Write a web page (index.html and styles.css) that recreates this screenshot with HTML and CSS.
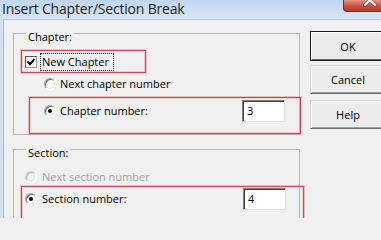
FILE: index.html
```html
<!DOCTYPE html>
<html>
<head>
<meta charset="utf-8">
<title>Insert Chapter/Section Break</title>
<link rel="stylesheet" href="styles.css">
</head>
<body>
<div class="window">
  <div class="titlebar">
    <div class="title">Insert Chapter/Section Break</div>
    <div class="close">
      <svg width="45" height="11" viewBox="0 0 45 11">
        <path d="M21 -5 L31 5 M31 -5 L21 5" stroke="#6a231c" stroke-width="4" stroke-linecap="round" opacity=".45" fill="none"/>
        <path d="M21 -5 L31 5 M31 -5 L21 5" stroke="#fff" stroke-width="2.2" stroke-linecap="round" fill="none"/>
      </svg>
    </div>
  </div>
  <div class="client">
    <div class="groups">
      <div class="group group-chapter">
        <div class="group-label">Chapter:</div>
        <div class="mark mark-new">
          <span class="checkbox">
            <svg width="10" height="10" viewBox="0 0 10 10"><path d="M1.5 4.5 L4 7.2 L8.6 1.8" stroke="#000" stroke-width="2" fill="none"/></svg>
          </span>
          <span class="focus">New Chapter</span>
        </div>
        <div class="option option-indent">
          <span class="radio"></span><span>Next chapter number</span>
        </div>
        <div class="mark mark-chapnum">
          <div class="option option-fill">
            <span class="radio checked"></span><span>Chapter number:</span>
            <span class="field">3</span>
          </div>
        </div>
      </div>
      <div class="group group-section">
        <div class="group-label">Section:</div>
        <div class="option option-section disabled">
          <span class="radio radio-disabled"></span><span>Next section number</span>
        </div>
        <div class="mark mark-secnum">
          <div class="option option-fill">
            <span class="radio radio-wide checked"></span><span>Section number:</span>
            <span class="field">4</span>
          </div>
        </div>
      </div>
    </div>
    <div class="buttons">
      <div class="btn btn-ok">OK</div>
      <div class="btn btn-cancel">Cancel</div>
      <div class="btn btn-help">Help</div>
    </div>
  </div>
</div>
</body>
</html>
```
FILE: styles.css
```css
html, body {
  margin: 0;
  padding: 0;
}
body {
  width: 381px;
  height: 218px;
  overflow: hidden;
  background: #f0f0f0;
  font-family: "Open Sans", "Noto Sans", sans-serif;
  font-size: 11px;
  color: #000;
}
.window {
  width: 381px;
  height: 218px;
  overflow: hidden;
  background: #d3e2f3;
  display: flex;
  flex-direction: column;
}
.titlebar {
  height: 19px;
  flex: none;
  display: flex;
  align-items: flex-start;
  background: linear-gradient(#c0d6ee, #d8e6f5);
}
.title {
  padding-left: 2px;
  font-size: 14px;
  line-height: 17px;
  letter-spacing: -0.2px;
  color: #1e1e1e;
  white-space: nowrap;
}
.close {
  margin-left: auto;
  margin-right: -9px;
  flex: none;
  width: 45px;
  height: 11px;
  border: 1px solid #7d2a22;
  border-top: none;
  border-radius: 0 0 0 4px;
  background: linear-gradient(#e59286, #c9493d 60%, #b63a30);
  overflow: hidden;
}
.close svg {
  display: block;
}
.client {
  flex: 1;
  display: flex;
  margin-left: 3px;
  border-left: 1px solid #a9bcd1;
  border-top: 1px solid #b7c8da;
  background: #f0f0f0;
}
.groups {
  flex: none;
  width: 306px;
  padding-left: 9px;
  box-sizing: border-box;
}
.group {
  width: 287px;
  box-sizing: border-box;
  border: 1px solid #b2b6ba;
}
.group-chapter {
  margin-top: 13px;
  height: 102px;
}
.group-section {
  margin-top: 14px;
  height: 100px;
}
.group-label {
  width: max-content;
  margin: -4px 0 0 12px;
  padding: 0 2px;
  line-height: 14px;
  background: #f0f0f0;
}
.mark {
  box-sizing: border-box;
  display: flex;
  align-items: center;
  border: 1px solid #c84c5a;
  box-shadow: 0 0 0 1px rgba(228, 140, 152, 0.5), inset 0 0 0 1px rgba(228, 140, 152, 0.35);
}
.mark-new {
  width: 125px;
  height: 23px;
  margin: 6px 0 0 7px;
  padding-left: 3px;
}
.checkbox {
  flex: none;
  width: 12px;
  height: 12px;
  box-sizing: border-box;
  border: 1px solid;
  border-color: #555 #9a9a9a #9a9a9a #555;
  background: #fff;
  display: flex;
  align-items: center;
  justify-content: center;
}
.checkbox svg {
  display: block;
}
.focus {
  margin-left: 3px;
  border: 1px dotted #222;
  padding: 0 4px 0 1px;
  line-height: 16px;
}
.option {
  display: flex;
  align-items: center;
  line-height: 14px;
  white-space: nowrap;
}
.option-indent {
  margin: 4px 0 0 30px;
}
.option-section {
  margin: 10px 0 0 11px;
}
.option-fill {
  flex: 1;
}
.disabled {
  color: #a3a3a3;
}
.radio {
  flex: none;
  width: 12px;
  height: 12px;
  box-sizing: border-box;
  margin-right: 4px;
  border-radius: 50%;
  border: 1px solid;
  border-color: #a0a0a0 #fff #fff #a0a0a0;
  background: #fff;
  box-shadow: inset 1px 1px 0 #696969, inset -1px -1px 0 #e3e3e3;
}
.radio-wide,
.radio-disabled {
  margin-right: 5px;
}
.radio-disabled {
  border-color: #d0d0d0 #fff #fff #d0d0d0;
  background: #f0f0f0;
  box-shadow: inset 1px 1px 0 #b4b4b4, inset -1px -1px 0 #e8e8e8;
}
.radio.checked::after {
  content: "";
  display: block;
  width: 4px;
  height: 4px;
  margin: 3px;
  border-radius: 50%;
  background: #000;
}
.mark-chapnum {
  height: 37px;
  margin: 6px -2px 0 15px;
  padding: 2px 15px 0 14px;
  align-items: flex-start;
}
.mark-secnum {
  height: 34px;
  margin: 2px -5px 0 7px;
  padding: 1px 17px 0 3px;
  align-items: flex-start;
}
.field {
  margin-left: auto;
  width: 43px;
  height: 22px;
  box-sizing: border-box;
  padding-left: 4px;
  line-height: 20px;
  background: #fff;
  border: 1px solid;
  border-color: #7f7f7f #e0e0e0 #e0e0e0 #7f7f7f;
  box-shadow: inset 1px 1px 0 #404040;
  color: #000;
}
.buttons {
  flex: 1;
  display: flex;
  flex-direction: column;
  padding-top: 11px;
}
.btn {
  flex: none;
  width: 76px;
  height: 29px;
  box-sizing: border-box;
  display: flex;
  align-items: center;
  justify-content: center;
  background: #ececec;
  border: 1px solid;
  border-color: #d6d6d6 #696969 #696969 #d6d6d6;
  box-shadow: inset 1px 1px 0 #fff, inset -1px -1px 0 #a0a0a0;
}
.btn-ok {
  height: 30px;
  border: 1px solid #1a1a1a;
  box-shadow: inset 1px 1px 0 #fff, inset -1px -1px 0 #696969;
}
.btn-cancel {
  margin-top: 4px;
}
.btn-help {
  margin-top: 6px;
}
```
